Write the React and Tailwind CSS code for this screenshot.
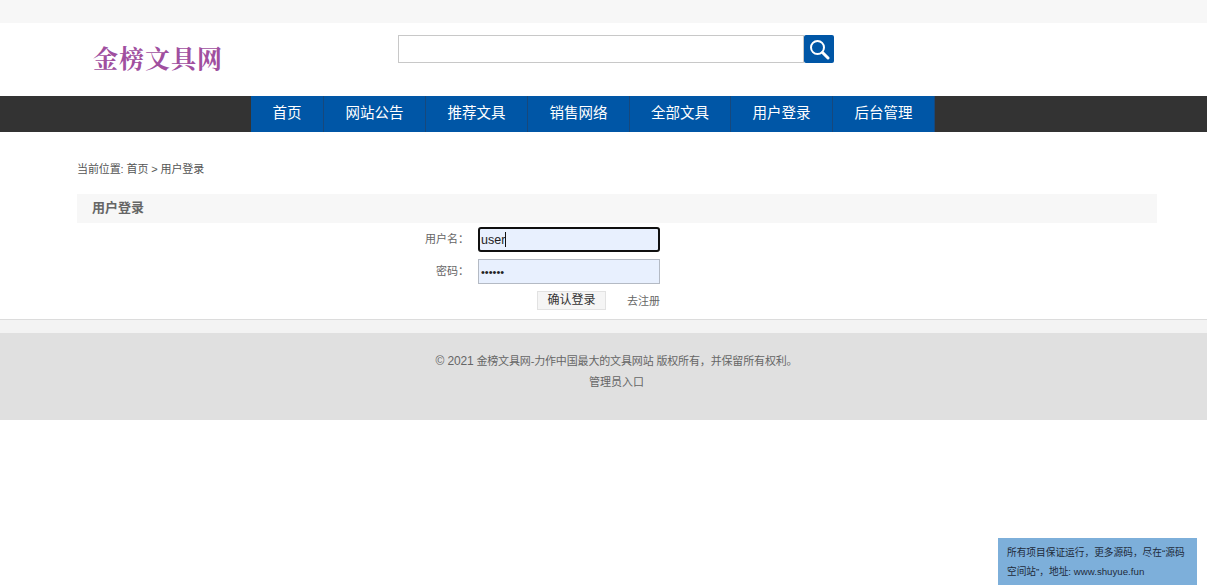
const cjk = "font-['Liberation_Sans','Noto_Sans_CJK_SC',sans-serif]";

const navItems = [
  { label: "首页", width: "w-[73px]" },
  { label: "网站公告", width: "w-[102px]" },
  { label: "推荐文具", width: "w-[102px]" },
  { label: "销售网络", width: "w-[102px]" },
  { label: "全部文具", width: "w-[101px]" },
  { label: "用户登录", width: "w-[102px]" },
  { label: "后台管理", width: "w-[102px]" },
];

function SearchIcon() {
  return (
    <svg width="22" height="22" viewBox="0 0 22 22" fill="none" stroke="white">
      <circle cx="9.5" cy="9.5" r="6.5" strokeWidth="2" />
      <path d="M14.5 14.5L20 20" strokeWidth="3" strokeLinecap="round" />
    </svg>
  );
}

export default function App() {
  return (
    <div className={`${cjk} min-h-[585px] bg-white text-[#555]`}>
      <div className="h-[23px] bg-[#f7f7f7]" />

      <header className="flex h-[73px] bg-white">
        <div className="ml-[93px] mt-[20px] w-[305px] font-['Liberation_Serif','Noto_Serif_CJK_SC','Noto_Sans_CJK_SC',serif] text-[25px] leading-[34px] font-bold tracking-[1px] text-[#a04f9f]">
          金榜文具网
        </div>
        <div className="mt-[12px] flex h-[28px]">
          <input className="h-[28px] w-[406px] border border-[#c8c8c8] bg-white outline-none" />
          <button className="flex h-[28px] w-[30px] items-center justify-center rounded-[2px] bg-[#0056a6]">
            <SearchIcon />
          </button>
        </div>
      </header>

      <nav className="flex h-[36px] bg-[#333333] pl-[251px]">
        {navItems.map((item) => (
          <a
            key={item.label}
            className={`${item.width} flex items-center justify-center border-r border-[#17487c] bg-[#0056a6] text-[14.5px] text-white`}
          >
            {item.label}
          </a>
        ))}
      </nav>

      <main className="px-[77px] pr-[50px]">
        <div className="mt-[29px] h-[16px] text-[11px] leading-[16px] tracking-[-0.1px] text-[#555]">
          当前位置: 首页 &gt; 用户登录
        </div>
        <div className="mt-[17px] h-[29px] bg-[#f7f7f7] pl-[15px] text-[13px] leading-[28px] font-bold text-[#666]">
          用户登录
        </div>

        <form className="mt-[4px] flex flex-col">
          <div className="flex h-[25px] items-center">
            <label className="w-[392px] text-right text-[11px] text-[#666]">用户名：</label>
            <div className="relative ml-[9px]">
              <input
                defaultValue="user"
                className="block h-[25px] w-[182px] rounded-[3px] border-2 border-[#101010] bg-[#e8f0fe] px-[1px] text-[12.5px] text-[#222] outline-none"
              />
              <span className="absolute top-[5px] left-[27px] h-[15px] w-px bg-[#111]" />
            </div>
          </div>
          <div className="mt-[7px] flex h-[25px] items-center">
            <label className="w-[392px] text-right text-[11px] text-[#666]">密码：</label>
            <input
              type="password"
              defaultValue="123456"
              className="ml-[9px] h-[25px] w-[182px] border border-[#b4bac4] bg-[#e8f0fe] px-[2px] text-[11px] text-[#222] outline-none"
            />
          </div>
          <div className="mt-[7px] flex h-[19px] items-center">
            <button
              type="button"
              className="ml-[460px] h-[19px] w-[69px] border border-[#e2e2e2] bg-[#f5f5f5] text-[12px] leading-[17px] text-[#333]"
            >
              确认登录
            </button>
            <a className="mt-[2px] ml-[21px] text-[11px] text-[#666]">去注册</a>
          </div>
        </form>
      </main>

      <div className="mt-[9px] h-[14px] border-t border-[#dcdcdc] bg-[#f3f3f3]" />
      <footer className="h-[87px] bg-[#e0e0e0] pt-[18px] text-center text-[11px] leading-[21px] text-[#666]">
        <p className="pl-[26px] tracking-[-0.15px]">
          <span className="text-[12px]">© 2021</span> 金榜文具网-力作中国最大的文具网站 版权所有，并保留所有权利。
        </p>
        <p className="pl-[26px]">管理员入口</p>
      </footer>

      <div className="fixed right-[10px] bottom-0 h-[47px] w-[199px] bg-[#7dafda] px-[9px] py-[5px] text-[9.7px] leading-[19px] text-[#1d2b3a]">
        所有项目保证运行，更多源码，尽在“源码空间站”，地址: www.shuyue.fun
      </div>
    </div>
  );
}
